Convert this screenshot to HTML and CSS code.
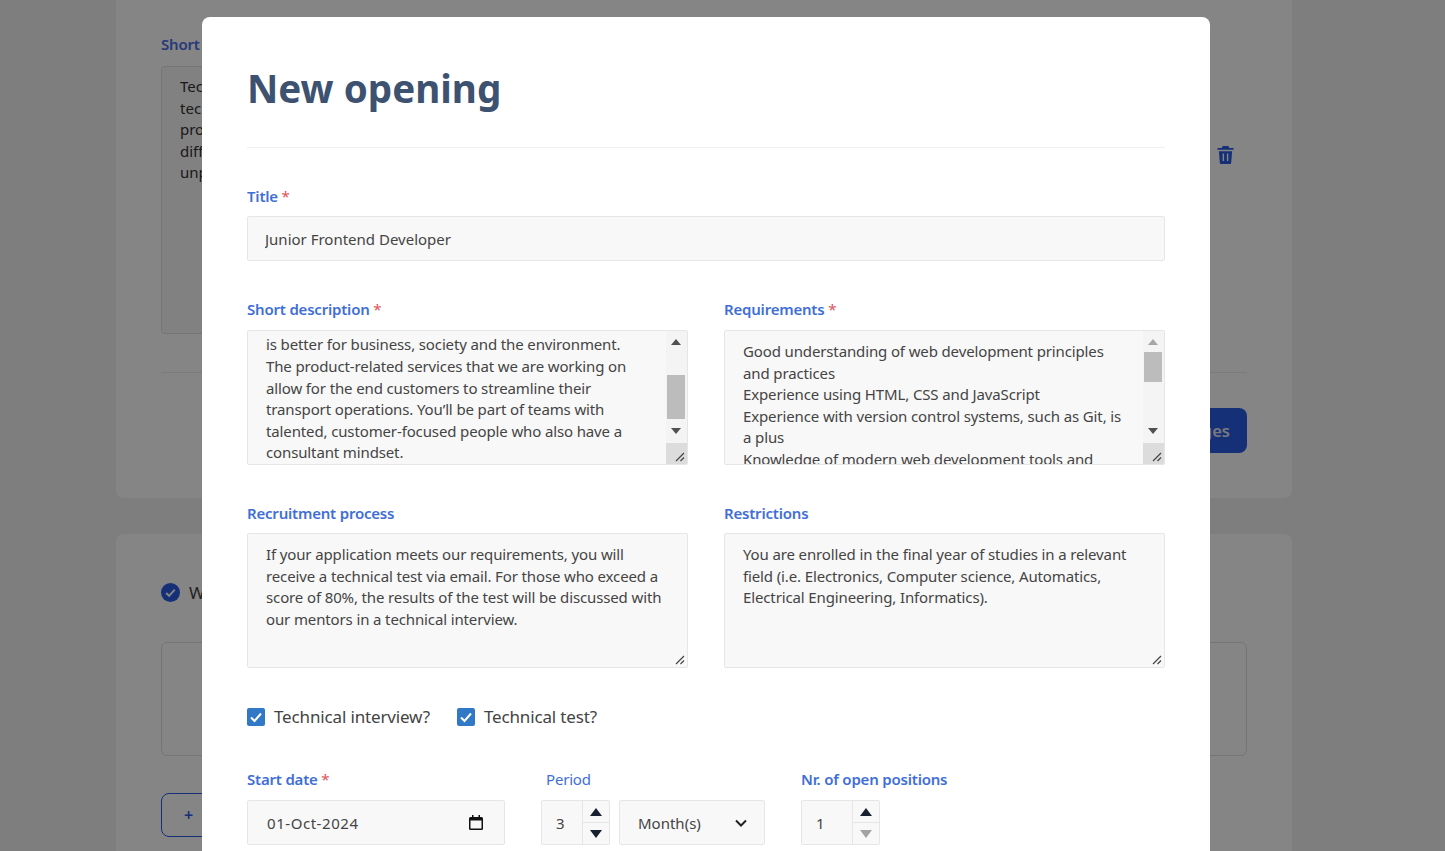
FILE: index.html
```html
<!DOCTYPE html>
<html lang="en">
<head>
  <meta charset="UTF-8">
  <meta name="viewport" content="width=device-width, initial-scale=1.0">
  <title>New opening</title>
  <link rel="stylesheet" href="styles.css">
</head>
<body>
  <div class="page">
    <div class="card card-top">
      <div class="back-label">Short</div>
      <div class="back-row">
        <div class="back-text">Tec<br>tec<br>pro<br>diff<br>unp</div>
        <svg class="trash" viewBox="0 0 18 20" width="17" height="19"><path fill="#2b5ce6" d="M6 1h6l1 2h4.500v2H.5V3H5zM2 6.500h14L15 19a1 1 0 0 1-1 1H4a1 1 0 0 1-1-1zM6 9v8h1.500V9zm4.500 0v8H12V9z"/></svg>
      </div>
      <div class="back-rule"></div>
      <div class="back-actions"><span class="btn-save">Save changes</span></div>
    </div>
    <div class="card card-bottom">
      <div class="back-check">
        <svg viewBox="0 0 20 20" width="19" height="19"><circle cx="10" cy="10" r="10" fill="#2b5ce6"/><path d="M5.500 10.500l3 3 6-6.500" fill="none" stroke="#fff" stroke-width="2"/></svg>
        <span>W</span>
      </div>
      <div class="back-box"></div>
      <div class="btn-add">+</div>
    </div>
  </div>

  <div class="overlay">
    <div class="modal">
      <h1 class="modal-title">New opening</h1>

      <div class="field">
        <label class="label">Title <span class="req">*</span></label>
        <input class="input" type="text" value="Junior Frontend Developer">
      </div>

      <div class="two-cols">
        <div>
          <label class="label">Short description <span class="req">*</span></label>
          <div class="area area-scroll area-end">
            <div class="area-text">is better for business, society and the environment.<br>The product-related services that we are working on<br>allow for the end customers to streamline their<br>transport operations. You’ll be part of teams with<br>talented, customer-focused people who also have a<br>consultant mindset.</div>
            <div class="scrollbar">
              <svg class="sb-arrow sb-up" viewBox="0 0 10 6" width="10" height="6"><path d="M5 0l5 6H0z" fill="#505050"/></svg>
              <div class="sb-thumb thumb-low"></div>
              <svg class="sb-arrow sb-down" viewBox="0 0 10 6" width="10" height="6"><path d="M5 6l5-6H0z" fill="#505050"/></svg>
              <div class="sb-corner"></div>
            </div>
            <svg class="grip" viewBox="0 0 10 10" width="10" height="10"><path d="M1 9l8-8M5.500 9L9 5.500" stroke="#444" stroke-width="1.200"/></svg>
          </div>
        </div>
        <div>
          <label class="label">Requirements <span class="req">*</span></label>
          <div class="area area-scroll">
            <div class="area-text">Good understanding of web development principles<br>and practices<br>Experience using HTML, CSS and JavaScript<br>Experience with version control systems, such as Git, is<br>a plus<br>Knowledge of modern web development tools and</div>
            <div class="scrollbar">
              <svg class="sb-arrow sb-up" viewBox="0 0 10 6" width="10" height="6"><path d="M5 0l5 6H0z" fill="#a6a6a6"/></svg>
              <div class="sb-thumb thumb-high"></div>
              <svg class="sb-arrow sb-down" viewBox="0 0 10 6" width="10" height="6"><path d="M5 6l5-6H0z" fill="#505050"/></svg>
              <div class="sb-corner"></div>
            </div>
            <svg class="grip" viewBox="0 0 10 10" width="10" height="10"><path d="M1 9l8-8M5.500 9L9 5.500" stroke="#444" stroke-width="1.200"/></svg>
          </div>
        </div>
        <div>
          <label class="label">Recruitment process</label>
          <div class="area area-low">
            <div class="area-text">If your application meets our requirements, you will<br>receive a technical test via email. For those who exceed a<br>score of 80%, the results of the test will be discussed with<br>our mentors in a technical interview.</div>
            <svg class="grip" viewBox="0 0 10 10" width="10" height="10"><path d="M1 9l8-8M5.500 9L9 5.500" stroke="#444" stroke-width="1.200"/></svg>
          </div>
        </div>
        <div>
          <label class="label">Restrictions</label>
          <div class="area area-low">
            <div class="area-text">You are enrolled in the final year of studies in a relevant<br>field (i.e. Electronics, Computer science, Automatics,<br>Electrical Engineering, Informatics).</div>
            <svg class="grip" viewBox="0 0 10 10" width="10" height="10"><path d="M1 9l8-8M5.500 9L9 5.500" stroke="#444" stroke-width="1.200"/></svg>
          </div>
        </div>
      </div>

      <div class="checks">
        <div class="check">
          <span class="check-box"><svg viewBox="0 0 18 18" width="18" height="18"><path d="M4 9.500l3.500 3.500L14 5.500" fill="none" stroke="#fff" stroke-width="2"/></svg></span>
          <span>Technical interview?</span>
        </div>
        <div class="check">
          <span class="check-box"><svg viewBox="0 0 18 18" width="18" height="18"><path d="M4 9.500l3.500 3.500L14 5.500" fill="none" stroke="#fff" stroke-width="2"/></svg></span>
          <span>Technical test?</span>
        </div>
      </div>

      <div class="bottom-row">
        <div class="col-date">
          <label class="label">Start date <span class="req">*</span></label>
          <div class="control date">
            <span class="date-val">01-Oct-2024</span>
            <svg viewBox="0 0 14 15" width="14" height="15"><path d="M3 0v2H1.500A1.500 1.500 0 0 0 0 3.500v10A1.500 1.500 0 0 0 1.500 15h11a1.500 1.500 0 0 0 1.500-1.500v-10A1.500 1.500 0 0 0 12.500 2H11V0H9.500v2h-5V0zM1.500 5.500h11v8h-11z" fill="#111"/></svg>
          </div>
        </div>
        <div class="col-period">
          <label class="label label-plain">Period</label>
          <div class="period-row">
            <div class="control spin">
              <span class="spin-val">3</span>
              <div class="spin-btns">
                <span class="spin-btn"><svg viewBox="0 0 12 8" width="12" height="8"><path d="M6 0l6 8H0z" fill="#16202e"/></svg></span>
                <span class="spin-btn"><svg viewBox="0 0 12 8" width="12" height="8"><path d="M6 8l6-8H0z" fill="#16202e"/></svg></span>
              </div>
            </div>
            <div class="control select">
              <span>Month(s)</span>
              <svg viewBox="0 0 12 8" width="12" height="8"><path d="M1 1.500l5 5 5-5" fill="none" stroke="#222" stroke-width="2"/></svg>
            </div>
          </div>
        </div>
        <div class="col-open">
          <label class="label">Nr. of open positions</label>
          <div class="control spin spin-open">
            <span class="spin-val">1</span>
            <div class="spin-btns">
              <span class="spin-btn"><svg viewBox="0 0 12 8" width="12" height="8"><path d="M6 0l6 8H0z" fill="#16202e"/></svg></span>
              <span class="spin-btn"><svg viewBox="0 0 12 8" width="12" height="8"><path d="M6 8l6-8H0z" fill="#a3a3a3"/></svg></span>
            </div>
          </div>
        </div>
      </div>
    </div>
  </div>
</body>
</html>
```

FILE: styles.css
```css
* {
  box-sizing: border-box;
}

html, body {
  margin: 0;
  height: 851px;
  overflow: hidden;
}

body {
  background: #f1f1f1;
  font-family: "Noto Sans", "Liberation Sans", sans-serif;
  color: #444;
}

/* page behind the dialog */
.page {
  width: 1176px;
  margin-left: 116px;
}
.card {
  background: #fff;
  border-radius: 8px;
  padding: 0 45px;
}
.card-top {
  height: 498px;
  border-radius: 0 0 8px 8px;
  padding-top: 34px;
}
.card-bottom {
  height: 400px;
  margin-top: 36px;
  padding-top: 48px;
}
.back-label {
  font-size: 15px;
  font-weight: 600;
  color: #4c70e8;
  line-height: 20px;
  letter-spacing: -0.2px;
}
.back-row {
  display: flex;
  justify-content: space-between;
  align-items: flex-start;
  margin-top: 12px;
}
.back-text {
  width: 1040px;
  height: 268px;
  border: 1px solid #e2e2e2;
  background: #f8f8f8;
  border-radius: 3px;
  padding: 9px 18px;
  font-size: 15px;
  line-height: 21.6px;
  color: #333;
}
.trash {
  margin: 79px 13px 0 0;
}
.back-rule {
  height: 1px;
  background: #e8eaee;
  margin-top: 38px;
}
.back-actions {
  display: flex;
  justify-content: flex-end;
  margin-top: 35px;
}
.btn-save {
  background: #2b5ce6;
  color: #e4e9f5;
  font-size: 16.5px;
  font-weight: 600;
  height: 45px;
  line-height: 45px;
  padding: 0 17px;
  border-radius: 8px;
}
.back-check {
  display: flex;
  align-items: center;
  gap: 9px;
  font-size: 17px;
  height: 20px;
}
.back-box {
  height: 114px;
  margin-top: 40px;
  border: 1px solid #dfe1e5;
  border-radius: 6px;
}
.btn-add {
  width: 120px;
  height: 44px;
  margin-top: 37px;
  border: 1px solid #2b5ce6;
  border-radius: 8px;
  color: #2b5ce6;
  font-weight: 600;
  line-height: 42px;
  padding-left: 22px;
}

/* dialog */
.overlay {
  position: fixed;
  left: 0;
  top: 0;
  right: 0;
  bottom: 0;
  background: rgba(0, 0, 0, 0.48);
  overflow: hidden;
}
.modal {
  width: 1008px;
  height: 900px;
  margin: 17px 0 0 202px;
  padding: 0 45px;
  background: #fff;
  border-radius: 8px 8px 0 0;
}
.modal-title {
  margin: 0;
  padding-top: 43px;
  height: 131px;
  border-bottom: 1px solid #f0f0f0;
  font-size: 38.6px;
  line-height: 56px;
  font-weight: 700;
  color: #3d5170;
}

.label {
  display: block;
  font-size: 15px;
  font-weight: 600;
  line-height: 20px;
  letter-spacing: -0.2px;
  color: #3f6fd6;
}
.label-plain {
  font-weight: 400;
  padding-left: 5px;
}
.req {
  color: #e0525a;
  font-weight: 400;
}

.field {
  margin-top: 38px;
}
.input {
  display: block;
  width: 100%;
  height: 45px;
  margin-top: 10px;
  padding: 0 17px;
  border: 1px solid #e6e6e6;
  border-radius: 2px;
  background: #f8f8f8;
  font: inherit;
  font-size: 15px;
  color: #444;
}

.two-cols {
  display: grid;
  grid-template-columns: 441px 441px;
  column-gap: 36px;
  row-gap: 38px;
  margin-top: 38px;
}
.area {
  position: relative;
  height: 135px;
  margin-top: 11px;
  padding: 10px 18px;
  border: 1px solid #e6e6e6;
  border-radius: 2px;
  background: #f8f8f8;
  font-size: 15px;
  line-height: 21.6px;
  letter-spacing: -0.13px;
  overflow: hidden;
}
.area-low {
  margin-top: 10px;
}
.area-end {
  display: flex;
  flex-direction: column;
  justify-content: flex-end;
  padding-bottom: 0;
}
.area-text {
  white-space: nowrap;
}
.scrollbar {
  position: absolute;
  top: 0;
  right: 0;
  bottom: 0;
  width: 21px;
  background: #f4f4f4;
}
.sb-arrow {
  position: absolute;
  left: 5px;
}
.sb-up {
  top: 8px;
}
.sb-down {
  bottom: 30px;
}
.sb-thumb {
  position: absolute;
  left: 1px;
  width: 18px;
  background: #bcbcbc;
}
.thumb-low {
  top: 44px;
  height: 44px;
}
.thumb-high {
  top: 21px;
  height: 30px;
}
.sb-corner {
  position: absolute;
  left: 0;
  right: 0;
  bottom: 0;
  height: 21px;
  background: #dcdcdc;
}
.grip {
  position: absolute;
  right: 2px;
  bottom: 2px;
}

.checks {
  display: flex;
  gap: 27px;
  margin-top: 37px;
  font-size: 17px;
  line-height: 24px;
  letter-spacing: -0.15px;
}
.check {
  display: flex;
  align-items: center;
  gap: 9px;
}
.check-box {
  width: 18px;
  height: 18px;
  border-radius: 2px;
  background: #3178c6;
  display: flex;
}

.bottom-row {
  display: flex;
  margin-top: 40px;
}
.col-date {
  width: 294px;
}
.col-period {
  width: 260px;
}
.control {
  display: flex;
  align-items: center;
  height: 45px;
  margin-top: 11px;
  border: 1px solid #e6e6e6;
  border-radius: 2px;
  background: #f8f8f8;
  font-size: 15px;
}
.date {
  width: 258px;
  justify-content: space-between;
  padding: 0 21px 0 19px;
}
.date-val {
  letter-spacing: 0.55px;
}
.period-row {
  display: flex;
  gap: 9px;
}
.spin {
  width: 69px;
}
.spin-open {
  width: 79px;
}
.spin-val {
  flex: 1;
  padding-left: 14px;
}
.spin-btns {
  width: 27px;
  height: 100%;
  display: flex;
  flex-direction: column;
  border-left: 1px solid #e6e6e6;
}
.spin-btn {
  flex: 1;
  display: flex;
  align-items: center;
  justify-content: center;
}
.spin-btn + .spin-btn {
  border-top: 1px solid #e6e6e6;
}
.select {
  width: 146px;
  justify-content: space-between;
  padding: 0 17px 0 18px;
}
```
